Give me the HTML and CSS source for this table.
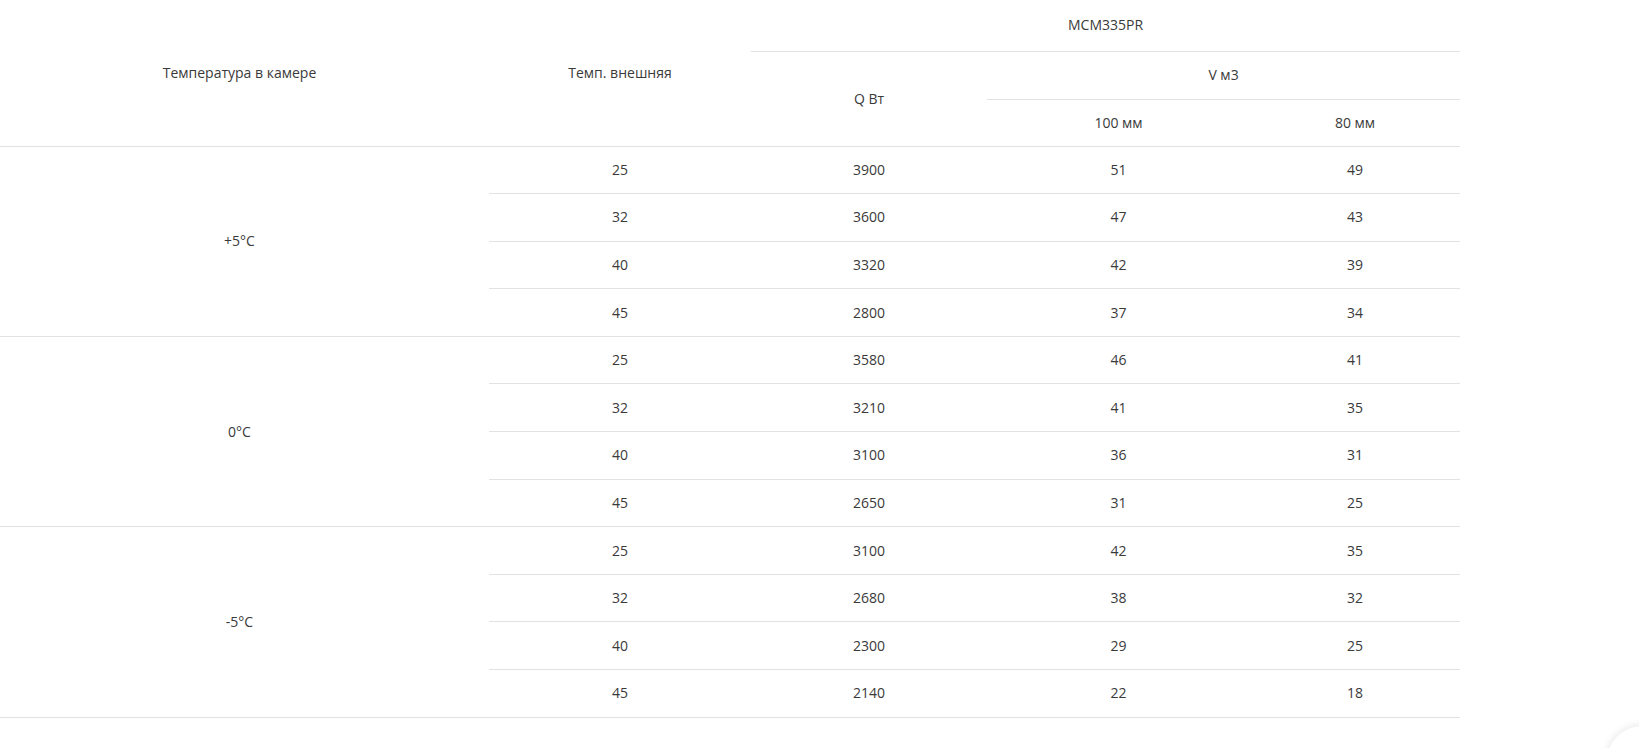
FILE: index.html
```html
<!DOCTYPE html>
<html lang="ru">
  <head>
    <meta charset="UTF-8" />
    <meta name="viewport" content="width=device-width, initial-scale=1.0" />
    <title>MCM335PR</title>
    <link rel="stylesheet" href="styles.css" />
  </head>
  <body>
    <main class="spec">
      <table class="spec-table">
        <colgroup>
          <col class="col-room" />
          <col class="col-outer" />
          <col class="col-power" />
          <col class="col-v100" />
          <col class="col-v80" />
        </colgroup>
        <thead>
          <tr class="head-top">
            <th rowspan="3" class="first">Температура в камере</th>
            <th rowspan="3">Темп. внешняя</th>
            <th colspan="3">MCM335PR</th>
          </tr>
          <tr class="head-mid">
            <th rowspan="2">Q Вт</th>
            <th colspan="2">V м3</th>
          </tr>
          <tr class="head-low">
            <th>100 мм</th>
            <th>80 мм</th>
          </tr>
        </thead>
        <tbody>
          <tr>
            <td rowspan="4" class="first">+5°C</td>
            <td>25</td><td>3900</td><td>51</td><td>49</td>
          </tr>
          <tr><td>32</td><td>3600</td><td>47</td><td>43</td></tr>
          <tr><td>40</td><td>3320</td><td>42</td><td>39</td></tr>
          <tr><td>45</td><td>2800</td><td>37</td><td>34</td></tr>
          <tr>
            <td rowspan="4" class="first">0°C</td>
            <td>25</td><td>3580</td><td>46</td><td>41</td>
          </tr>
          <tr><td>32</td><td>3210</td><td>41</td><td>35</td></tr>
          <tr><td>40</td><td>3100</td><td>36</td><td>31</td></tr>
          <tr><td>45</td><td>2650</td><td>31</td><td>25</td></tr>
          <tr>
            <td rowspan="4" class="first">-5°C</td>
            <td>25</td><td>3100</td><td>42</td><td>35</td>
          </tr>
          <tr><td>32</td><td>2680</td><td>38</td><td>32</td></tr>
          <tr><td>40</td><td>2300</td><td>29</td><td>25</td></tr>
          <tr><td>45</td><td>2140</td><td>22</td><td>18</td></tr>
        </tbody>
      </table>
    </main>
    <button class="to-top" aria-label="Наверх"></button>
  </body>
</html>
```

FILE: styles.css
```css
/* Reset */
* {
  margin: 0;
  padding: 0;
  box-sizing: border-box;
}

body {
  font-family: "Open Sans", "Liberation Sans", sans-serif;
  font-size: 14px;
  color: #3a3a3a;
  background-color: #fff;
}

/* Table */
.spec-table {
  width: 1460px;
  border-collapse: collapse;
  table-layout: fixed;
}

.col-room { width: 489px; }
.col-outer { width: 262px; }
.col-power { width: 236px; }
.col-v100 { width: 263px; }
.col-v80 { width: 210px; }

.spec-table th,
.spec-table td {
  font-weight: 400;
  text-align: center;
  vertical-align: middle;
  line-height: 20px;
  padding: 0 10px;
  border-bottom: 1px solid #e2e2e2;
}

.head-top { height: 51px; }
.head-mid { height: 48px; }
.head-low { height: 47px; }

.spec-table td {
  height: 47.6px;
}

.spec-table .first {
  padding-right: 20px;
}

/* Scroll-to-top button, mostly off screen */
.to-top {
  position: fixed;
  right: -38px;
  bottom: -48px;
  width: 70px;
  height: 70px;
  border: none;
  border-radius: 50%;
  background-color: #fff;
  box-shadow: 0 0 8px rgba(0, 0, 0, 0.12);
}
```
